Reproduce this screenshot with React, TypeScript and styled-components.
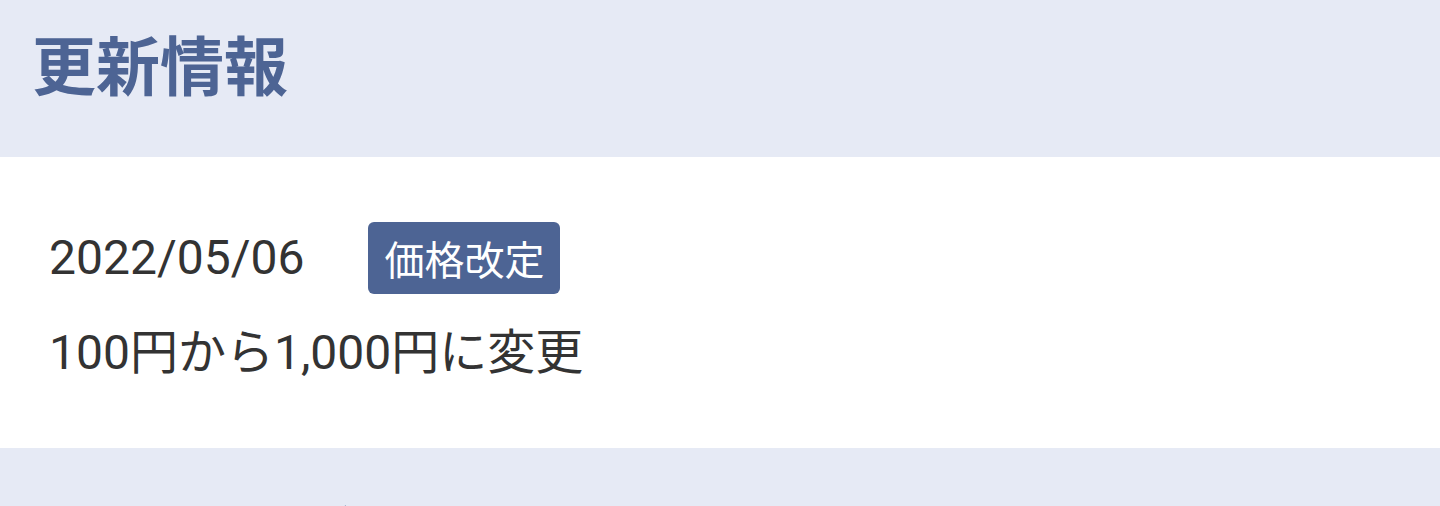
import React from "react";
import styled, { createGlobalStyle } from "styled-components";

const GlobalStyle = createGlobalStyle`
  html, body {
    margin: 0;
    padding: 0;
    background: #ffffff;
  }
  body {
    font-family: Roboto, "Noto Sans CJK JP", sans-serif;
    color: #333333;
  }
`;

const Page = styled.div`
  display: flex;
  flex-direction: column;
  width: 1440px;
`;

const SectionHeader = styled.header<{ $top: number }>`
  background: #e6eaf5;
  height: 157px;
  box-sizing: border-box;
  padding: ${(p) => p.$top}px 0 0 32px;
`;

const Title = styled.h2`
  margin: 0;
  font-family: "Noto Sans CJK JP", sans-serif;
  font-weight: 700;
  font-size: 64px;
  line-height: 96px;
  color: #4d6494;
  letter-spacing: 0;
`;

const Content = styled.section`
  background: #ffffff;
  height: 291px;
  box-sizing: border-box;
  padding: 65px 49px 0;
  display: flex;
  flex-direction: column;
`;

const MetaRow = styled.div`
  display: flex;
  align-items: center;
  gap: 64px;
  height: 72px;
`;

const DateText = styled.time`
  font-family: Roboto, "Noto Sans CJK JP", sans-serif;
  font-size: 48px;
  line-height: 1;
  color: #333333;
`;

const Badge = styled.span`
  display: inline-flex;
  align-items: center;
  justify-content: center;
  height: 72px;
  box-sizing: border-box;
  padding: 0 16px;
  border-radius: 6px;
  background: #4d6494;
  color: #ffffff;
  font-family: "Noto Sans CJK JP", sans-serif;
  font-size: 40px;
  line-height: 1;
`;

const Body = styled.p`
  margin: 24px 0 0;
  font-family: Roboto, "Noto Sans CJK JP", sans-serif;
  font-size: 48px;
  line-height: 69px;
  color: #333333;
`;

export default function App() {
  return (
    <>
      <GlobalStyle />
      <Page>
        <SectionHeader $top={14}>
          <Title>更新情報</Title>
        </SectionHeader>
        <Content>
          <MetaRow>
            <DateText>2022/05/06</DateText>
            <Badge>価格改定</Badge>
          </MetaRow>
          <Body>100円から1,000円に変更</Body>
        </Content>
        <SectionHeader $top={37}>
          <Title>よくあるご質問</Title>
        </SectionHeader>
      </Page>
    </>
  );
}
